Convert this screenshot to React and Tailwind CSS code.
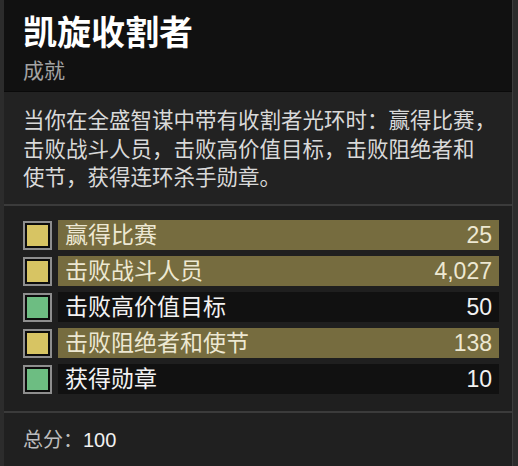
import React from 'react'

const rows = [
  { label: '赢得比赛', value: '25', done: false },
  { label: '击败战斗人员', value: '4,027', done: false },
  { label: '击败高价值目标', value: '50', done: true },
  { label: '击败阻绝者和使节', value: '138', done: false },
  { label: '获得勋章', value: '10', done: true },
]

const font = { fontFamily: '"Liberation Sans", "Noto Sans CJK SC", sans-serif' }

const Row = ({ label, value, done }) => (
  <div className="flex items-center gap-[6px] h-[30px]">
    <div className="w-[29px] h-[29px] border-2 border-[#8e8e8e] bg-[#0c0c0c] p-[2px] shrink-0">
      <div className={done ? 'w-full h-full bg-[#6dbd82]' : 'w-full h-full bg-[#d7c463]'} />
    </div>
    <div
      className={
        done
          ? 'flex-1 h-[30px] flex items-center justify-between pl-[7px] pr-[7px] bg-[#111111] text-[#f2f2f2]'
          : 'flex-1 h-[30px] flex items-center justify-between pl-[7px] pr-[7px] bg-[#766c3f] text-[#ede8d2]'
      }
    >
      <span className="text-[23px] leading-[30px]">{label}</span>
      <span className="text-[23px] leading-[30px]">{value}</span>
    </div>
  </div>
)

export default function App() {
  return (
    <div className="w-[518px] h-[466px] bg-[#2c2c2c] overflow-hidden" style={font}>
      <div className="ml-[4px] w-[509px] h-full flex flex-col bg-[#1f1f1f] border-r border-[#3d3d3d]">
        {/* header */}
        <div className="h-[92px] bg-[#111111] pl-[19px] pt-[12px] border-b border-[#0a0a0a]">
          <div className="text-[34px] leading-[42px] font-bold text-white">凯旋收割者</div>
          <div className="mt-[4px] text-[21px] leading-[26px] text-[#a3a3a3]">成就</div>
        </div>

        {/* description */}
        <div className="h-[112px] bg-[#222222] pl-[19px] pr-[4px] pt-[15px]">
          <p className="text-[21.5px] leading-[28.5px] text-[#d9d9d9] whitespace-nowrap">
            当你在全盛智谋中带有收割者光环时：赢得比赛，
            <br />
            击败战斗人员，击败高价值目标，击败阻绝者和
            <br />
            使节，获得连环杀手勋章。
          </p>
        </div>
        <div className="h-[2px] bg-[#3b3b3b]" />

        {/* objectives */}
        <div className="h-[205px] bg-[#1f1f1f] pl-[19px] pr-[13px] pt-[14px] flex flex-col gap-[6px]">
          {rows.map((r) => (
            <Row key={r.label} {...r} />
          ))}
        </div>
        <div className="h-[2px] bg-[#3b3b3b]" />

        {/* footer */}
        <div className="flex-1 bg-[#202020] pl-[19px] pt-[15px]">
          <span className="text-[20px] leading-[24px] text-[#bdbdbd]">总分：</span>
          <span className="text-[20px] leading-[24px] text-[#f0f0f0]">100</span>
        </div>
      </div>
    </div>
  )
}
